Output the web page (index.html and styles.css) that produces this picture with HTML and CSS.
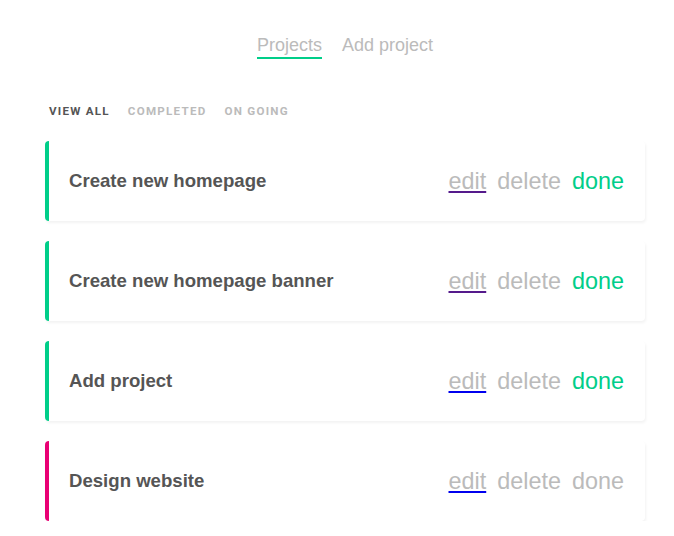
FILE: index.html
```html
<!DOCTYPE html>
<html>
<head>
<meta charset="utf-8">
<link rel="stylesheet" href="styles.css">
</head>
<body>
<div class="app">
  <nav class="tabs">
    <a class="tab active">Projects</a>
    <a class="tab">Add project</a>
  </nav>
  <div class="filters">
    <span class="filter active">VIEW ALL</span>
    <span class="filter">COMPLETED</span>
    <span class="filter">ON GOING</span>
  </div>
  <div class="list">
    <div class="card complete">
      <h3 class="title">Create new homepage</h3>
      <div class="actions"><a class="act edit visited">edit</a><a class="act">delete</a><a class="act done">done</a></div>
    </div>
    <div class="card complete">
      <h3 class="title">Create new homepage banner</h3>
      <div class="actions"><a class="act edit visited">edit</a><a class="act">delete</a><a class="act done">done</a></div>
    </div>
    <div class="card complete">
      <h3 class="title">Add project</h3>
      <div class="actions"><a class="act edit">edit</a><a class="act">delete</a><a class="act done">done</a></div>
    </div>
    <div class="card pending">
      <h3 class="title">Design website</h3>
      <div class="actions"><a class="act edit">edit</a><a class="act">delete</a><a class="act">done</a></div>
    </div>
  </div>
</div>
</body>
</html>
```
FILE: styles.css
```css
html, body {
  margin: 0;
  padding: 0;
  background: #fff;
  font-family: "Liberation Sans", Arial, sans-serif;
}
.app {
  width: 600px;
  margin-left: 45px;
}
.tabs {
  display: flex;
  justify-content: center;
  gap: 20px;
  padding-top: 34px;
}
.tab {
  font-size: 18px;
  color: #bbb;
  line-height: 22px;
  padding-bottom: 1px;
  border-bottom: 2px solid transparent;
}
.tab.active {
  border-bottom-color: #00ce89;
}
.filters {
  display: flex;
  gap: 18px;
  margin-top: 46px;
  padding-left: 4px;
  font-family: Roboto, "Liberation Sans", sans-serif;
  font-weight: 700;
  font-size: 11.6px;
  letter-spacing: 1.25px;
  line-height: 13px;
}
.filter { color: #bbb; }
.filter.active { color: #555; }
.list {
  display: flex;
  flex-direction: column;
  gap: 20px;
  margin-top: 23px;
}
.card {
  height: 80px;
  box-sizing: border-box;
  background: #fff;
  border-radius: 4px;
  border-left: 4px solid #00ce89;
  box-shadow: 1px 2px 3px rgba(0, 0, 0, 0.05);
  display: flex;
  align-items: center;
  justify-content: space-between;
  padding: 0 21px 0 20px;
}
.card.pending { border-left-color: #e90074; }
.title {
  margin: 0;
  font-size: 18.6px;
  font-weight: 700;
  color: #555;
}
.actions {
  display: flex;
  gap: 11px;
  font-size: 23.4px;
}
.act { color: #bbb; }
.act.edit {
  text-decoration: underline;
  text-decoration-color: #0000ee;
}
.act.edit.visited { text-decoration-color: #551a8b; }
.act.done { color: #00ce89; }
.card.pending .act.done { color: #bbb; }
```
